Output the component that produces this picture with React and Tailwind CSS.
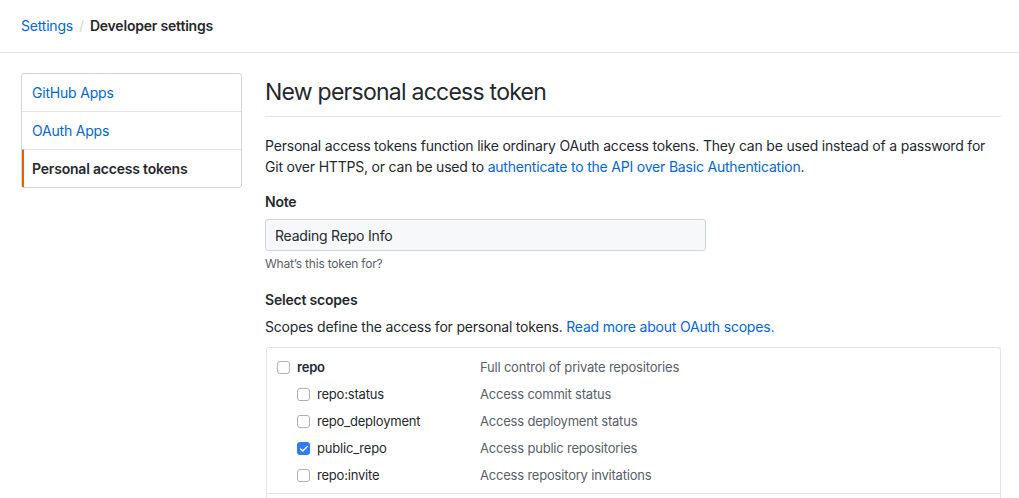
import { Check } from 'lucide-react'

const scopes = [
  { name: 'repo', desc: 'Full control of private repositories', parent: true },
  { name: 'repo:status', desc: 'Access commit status' },
  { name: 'repo_deployment', desc: 'Access deployment status' },
  { name: 'public_repo', desc: 'Access public repositories', checked: true },
  { name: 'repo:invite', desc: 'Access repository invitations' },
]

function Box({ checked }) {
  if (checked) {
    return (
      <span className="flex h-[13px] w-[13px] items-center justify-center rounded-[3px] bg-[#2f7cf6]">
        <Check size={10} strokeWidth={3.5} className="text-white" />
      </span>
    )
  }
  return <span className="block h-[13px] w-[13px] rounded-[3px] border border-[#b1b1b1] bg-white" />
}

export default function App() {
  const menu = ['GitHub Apps', 'OAuth Apps', 'Personal access tokens']

  return (
    <div className="min-h-screen bg-white text-[14px] tracking-[-0.2px] text-[#24292e]" style={{ fontFamily: 'Inter, "Noto Sans", sans-serif' }}>
      <div className="flex h-[53px] items-center border-b border-[#e1e4e8] px-[21px] pb-px">
        <a className="text-[#0366d6]">Settings</a>
        <span className="mx-[6px] text-[#d1d5da]">/</span>
        <span className="font-semibold">Developer settings</span>
      </div>

      <div className="flex gap-[23px] pl-[21px] pt-5">
        <nav className="w-[221px] shrink-0 self-start rounded-[3px] border border-[#d1d5da]">
          {menu.map((m, i) => (
            <div
              key={m}
              className={
                'flex items-center px-[10px] ' +
                (i > 0 ? 'h-[38px] border-t border-[#e1e4e8] ' : 'h-[37px] ') +
                (i === 2 ? 'border-l-2 border-l-[#e36209] pl-[8px] font-semibold' : 'text-[#0366d6]')
              }
            >
              {m}
            </div>
          ))}
        </nav>

        <main className="w-[736px] shrink-0">
          <h2 className="border-b border-[#e1e4e8] pt-[3px] pb-2 text-[23px] leading-[32px] font-normal tracking-[-0.75px]">New personal access token</h2>
          <p className="mt-[18px] leading-[21px]">
            Personal access tokens function like ordinary OAuth access tokens. They can be used instead of a password for Git over HTTPS, or can be used to{' '}
            <a className="text-[#0366d6]">authenticate to the API over Basic Authentication</a>.
          </p>

          <label className="mt-[14px] block font-semibold leading-[21px]">Note</label>
          <input
            readOnly
            value="Reading Repo Info"
            className="mt-[7px] block h-[32px] w-[441px] rounded-[3px] border border-[#d1d5da] bg-[#f6f8fa] px-[9px] text-[14px] tracking-[-0.2px] text-[#24292e] outline-none"
          />
          <p className="mt-1 text-[12px] leading-[18px] text-[#586069]">What’s this token for?</p>

          <div className="mt-[16px] font-semibold leading-[21px]">Select scopes</div>
          <p className="mt-[6px] leading-[21px]">
            Scopes define the access for personal tokens. <a className="text-[#0366d6]">Read more about OAuth scopes.</a>
          </p>

          <div className="mt-[10px] ml-px rounded-t-[3px] border border-b-0 border-[#e1e4e8]">
            <div className="border-b border-[#e1e4e8] pt-[6px] pb-[4px]">
              {scopes.map(s => (
                <div key={s.name} className="flex h-[27px] items-center text-[13px]">
                  <div className={'flex w-[213px] items-center gap-[7px] ' + (s.parent ? 'pl-[10px] font-semibold' : 'pl-[30px]')}>
                    <Box checked={s.checked} />
                    <span>{s.name}</span>
                  </div>
                  <span className="text-[#586069]">{s.desc}</span>
                </div>
              ))}
            </div>
            <div className="h-4" />
          </div>
        </main>
      </div>
    </div>
  )
}
